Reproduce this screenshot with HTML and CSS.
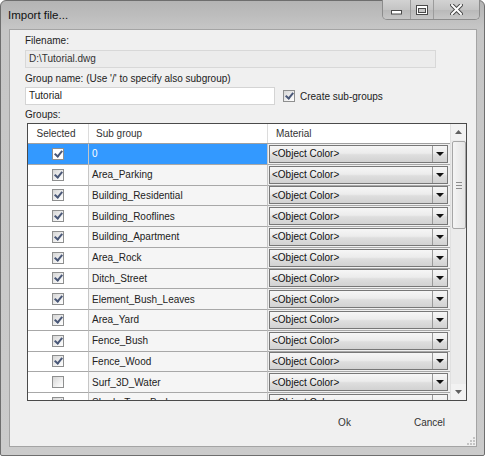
FILE: index.html
```html
<!DOCTYPE html>
<html>
<head>
<meta charset="utf-8">
<link rel="stylesheet" href="styles.css">
</head>
<body>
<div class="window">
  <div class="titlebar">
    <div class="title">Import file...</div>
    <div class="caption">
      <div class="cbtn cmin"><svg width="11" height="6" viewBox="0 0 11 6"><rect x="0.5" y="1.5" width="10" height="3.5" fill="#fff" stroke="#4a4a4a"/></svg></div>
      <div class="cbtn cmax"><svg width="12" height="10" viewBox="0 0 12 10"><rect x="0.5" y="0.5" width="11" height="9" fill="#fff" stroke="#4a4a4a"/><rect x="2.5" y="3.5" width="7" height="4" fill="#c8c8c8" stroke="#4a4a4a"/></svg></div>
      <div class="cbtn cclose"><svg width="13" height="11" viewBox="0 0 13 11"><path d="M2 1 L11 10 M11 1 L2 10" stroke="#4a4a4a" stroke-width="4" stroke-linecap="square"/><path d="M2 1 L11 10 M11 1 L2 10" stroke="#fff" stroke-width="2" stroke-linecap="square"/></svg></div>
    </div>
  </div>
  <div class="client">
    <div class="label l-file">Filename:</div>
    <div class="filebox">D:\Tutorial.dwg</div>
    <div class="label l-group">Group name: (Use '/' to specify also subgroup)</div>
    <div class="grouprow">
      <div class="textbox">Tutorial</div>
      <div class="chk-wrap">
        <span class="chk on"></span>
        <span class="chk-label">Create sub-groups</span>
      </div>
    </div>
    <div class="label l-groups">Groups:</div>
    <div class="grid">
      <div class="cols">
        <div class="row head">
          <div class="cell h-sel">Selected</div>
          <div class="cell h-name">Sub group</div>
          <div class="cell h-mat">Material</div>
        </div>
        <div class="row sel"><div class="cell c-sel"><span class="chk on"></span></div><div class="cell c-name">0</div><div class="cell c-mat"><div class="combo"><span class="ctext">&lt;Object Color&gt;</span><span class="carrow"></span></div></div></div>
        <div class="row"><div class="cell c-sel"><span class="chk on"></span></div><div class="cell c-name">Area_Parking</div><div class="cell c-mat"><div class="combo"><span class="ctext">&lt;Object Color&gt;</span><span class="carrow"></span></div></div></div>
        <div class="row"><div class="cell c-sel"><span class="chk on"></span></div><div class="cell c-name">Building_Residential</div><div class="cell c-mat"><div class="combo"><span class="ctext">&lt;Object Color&gt;</span><span class="carrow"></span></div></div></div>
        <div class="row"><div class="cell c-sel"><span class="chk on"></span></div><div class="cell c-name">Building_Rooflines</div><div class="cell c-mat"><div class="combo"><span class="ctext">&lt;Object Color&gt;</span><span class="carrow"></span></div></div></div>
        <div class="row"><div class="cell c-sel"><span class="chk on"></span></div><div class="cell c-name">Building_Apartment</div><div class="cell c-mat"><div class="combo"><span class="ctext">&lt;Object Color&gt;</span><span class="carrow"></span></div></div></div>
        <div class="row"><div class="cell c-sel"><span class="chk on"></span></div><div class="cell c-name">Area_Rock</div><div class="cell c-mat"><div class="combo"><span class="ctext">&lt;Object Color&gt;</span><span class="carrow"></span></div></div></div>
        <div class="row"><div class="cell c-sel"><span class="chk on"></span></div><div class="cell c-name">Ditch_Street</div><div class="cell c-mat"><div class="combo"><span class="ctext">&lt;Object Color&gt;</span><span class="carrow"></span></div></div></div>
        <div class="row"><div class="cell c-sel"><span class="chk on"></span></div><div class="cell c-name">Element_Bush_Leaves</div><div class="cell c-mat"><div class="combo"><span class="ctext">&lt;Object Color&gt;</span><span class="carrow"></span></div></div></div>
        <div class="row"><div class="cell c-sel"><span class="chk on"></span></div><div class="cell c-name">Area_Yard</div><div class="cell c-mat"><div class="combo"><span class="ctext">&lt;Object Color&gt;</span><span class="carrow"></span></div></div></div>
        <div class="row"><div class="cell c-sel"><span class="chk on"></span></div><div class="cell c-name">Fence_Bush</div><div class="cell c-mat"><div class="combo"><span class="ctext">&lt;Object Color&gt;</span><span class="carrow"></span></div></div></div>
        <div class="row"><div class="cell c-sel"><span class="chk on"></span></div><div class="cell c-name">Fence_Wood</div><div class="cell c-mat"><div class="combo"><span class="ctext">&lt;Object Color&gt;</span><span class="carrow"></span></div></div></div>
        <div class="row"><div class="cell c-sel"><span class="chk"></span></div><div class="cell c-name">Surf_3D_Water</div><div class="cell c-mat"><div class="combo"><span class="ctext">&lt;Object Color&gt;</span><span class="carrow"></span></div></div></div>
        <div class="row"><div class="cell c-sel"><span class="chk on"></span></div><div class="cell c-name">Shrub_Tree_Bark</div><div class="cell c-mat"><div class="combo"><span class="ctext">&lt;Object Color&gt;</span><span class="carrow"></span></div></div></div>
      </div>
      <div class="scrollbar">
        <div class="sb-btn"><svg width="7" height="4" viewBox="0 0 7 4"><path d="M0 4 L3.5 0 L7 4 Z" fill="#606060"/></svg></div>
        <div class="sb-thumb"><span></span><span></span><span></span></div>
        <div class="sb-track"></div>
        <div class="sb-btn"><svg width="7" height="4" viewBox="0 0 7 4"><path d="M0 0 L3.5 4 L7 0 Z" fill="#606060"/></svg></div>
      </div>
    </div>
    <div class="buttons">
      <div class="btn">Ok</div>
      <div class="btn">Cancel</div>
    </div>
    <svg class="grip" width="8" height="8" viewBox="0 0 8 8">
      <rect x="6" y="0" width="2" height="2" fill="#c4c4c4"/>
      <rect x="3" y="3" width="2" height="2" fill="#c4c4c4"/><rect x="6" y="3" width="2" height="2" fill="#c4c4c4"/>
      <rect x="0" y="6" width="2" height="2" fill="#c4c4c4"/><rect x="3" y="6" width="2" height="2" fill="#c4c4c4"/><rect x="6" y="6" width="2" height="2" fill="#c4c4c4"/>
    </svg>
  </div>
</div>
</body>
</html>
```
FILE: styles.css
```css
html, body {
  margin: 0;
  padding: 0;
  background: #ffffff;
}
body {
  width: 485px;
  height: 456px;
  font-family: "Liberation Sans", Arial, sans-serif;
  font-size: 10px;
  color: #222;
}
.window {
  box-sizing: border-box;
  width: 485px;
  height: 456px;
  border: 1px solid #6e6e6e;
  border-radius: 6px 6px 2px 2px;
  background: linear-gradient(#b4b4b4 0px, #c6c6c6 28px, #cbcbcb 100%);
  display: flex;
  flex-direction: column;
}
.titlebar {
  height: 28px;
  display: flex;
  align-items: flex-start;
}
.title {
  font-size: 11.5px;
  color: #111;
  padding-left: 7px;
  padding-top: 7px;
  line-height: 14px;
}
.caption {
  margin-left: auto;
  margin-right: 4px;
  margin-top: -1px;
  display: flex;
  height: 19px;
  border: 1px solid #8c8c8c;
  border-top: none;
  border-radius: 0 0 5px 5px;
  overflow: hidden;
}
.cbtn {
  height: 19px;
  display: flex;
  align-items: center;
  justify-content: center;
  background: linear-gradient(#d2d2d2, #c4c4c4 50%, #b8b8b8 51%, #c6c6c6);
  border-left: 1px solid #9c9c9c;
  box-sizing: border-box;
}
.cmin { width: 27px; border-left: none; padding-top: 5px; }
.cmax { width: 23px; }
.cclose { width: 46px; }
.client {
  position: relative;
  flex: 1;
  margin: 0 7px 8px 8px;
  background: #f0f0f0;
  border: 1px solid #a4a4a4;
  padding: 5px 9px 0 15px;
  display: flex;
  flex-direction: column;
}
.label {
  line-height: 12px;
  height: 12px;
}
.filebox {
  margin-top: 3px;
  width: 411px;
  height: 18px;
  box-sizing: border-box;
  background: #ececec;
  border: 1px solid #d8d8d8;
  padding-left: 3px;
  line-height: 16px;
  color: #333;
}
.l-group { margin-top: 5px; }
.grouprow {
  margin-top: 2px;
  display: flex;
  align-items: center;
  height: 18px;
}
.textbox {
  width: 250px;
  height: 18px;
  box-sizing: border-box;
  background: #fff;
  border: 1px solid #d4d4d4;
  padding-left: 3px;
  line-height: 16px;
}
.chk-wrap {
  display: flex;
  align-items: center;
  margin-left: 8px;
}
.chk-label { margin-left: 5px; }
.chk {
  display: inline-block;
  width: 12px;
  height: 12px;
  box-sizing: border-box;
  border: 1px solid #8e8f8f;
  background: linear-gradient(135deg, #d6d6d6, #f4f4f4 70%, #ffffff);
  position: relative;
}
.chk.on::after {
  content: "";
  position: absolute;
  left: 3px;
  top: 0px;
  width: 3px;
  height: 6px;
  border-right: 2px solid #4a5878;
  border-bottom: 2px solid #4a5878;
  transform: rotate(40deg);
}
.l-groups { margin-top: 4px; }
.grid {
  margin-top: 2px;
  margin-left: 2px;
  width: 440px;
  height: 278px;
  box-sizing: border-box;
  border: 1px solid #4a4a4a;
  display: flex;
  overflow: hidden;
  background: #fff;
}
.cols {
  width: 422px;
  overflow: hidden;
}
.row {
  display: grid;
  grid-template-columns: 61px 179px 182px;
  height: 20.75px;
  box-sizing: border-box;
}
.row.head {
  height: 20px;
  background: #fff;
  border-bottom: 1px solid #a0a0a0;
}
.cell {
  box-sizing: border-box;
  border-right: 1px solid #c6c6c6;
  border-bottom: 1px solid #a8a8a8;
  display: flex;
  align-items: center;
  white-space: nowrap;
  overflow: hidden;
}
.head .cell {
  border-bottom: none;
  border-right: 1px solid #dcdcdc;
  color: #333;
}
.h-sel { justify-content: center; padding-right: 4px; }
.h-name { padding-left: 7px; }
.h-mat { padding-left: 8px; border-right: none !important; }
.c-sel {
  justify-content: center;
  background: #fff;
}
.c-name {
  padding-left: 3px;
  background: #f5f5f5;
}
.row.sel .c-sel, .row.sel .c-name {
  background: #3399ff;
  color: #fff;
}
.row.sel .chk {
  background: #fff;
}
.c-mat {
  padding-left: 1px;
  border-right: none;
  background: #f0f0f0;
}
.combo {
  width: 179px;
  height: 18px;
  box-sizing: border-box;
  border: 1px solid #777;
  background: linear-gradient(#f6f6f6, #ececec 45%, #dedede 55%, #d2d2d2);
  display: flex;
  align-items: center;
}
.ctext {
  flex: 1;
  padding-left: 2px;
  color: #111;
}
.carrow {
  width: 15px;
  height: 16px;
  border-left: 1px solid #9a9a9a;
  box-sizing: border-box;
  position: relative;
}
.carrow::after {
  content: "";
  position: absolute;
  left: 3px;
  top: 6px;
  border-left: 4px solid transparent;
  border-right: 4px solid transparent;
  border-top: 4px solid #111;
}
.scrollbar {
  width: 16px;
  display: flex;
  flex-direction: column;
  background: #ebebeb;
  border-left: 1px solid #e0e0e0;
  box-sizing: border-box;
}
.sb-btn {
  height: 16px;
  display: flex;
  align-items: center;
  justify-content: center;
  background: #f2f2f2;
}
.sb-thumb {
  margin: 1px 0 0 1px;
  height: 88px;
  box-sizing: border-box;
  border: 1px solid #a6a6a6;
  border-radius: 2px;
  background: linear-gradient(90deg, #f4f4f4, #e4e4e4);
  display: flex;
  flex-direction: column;
  align-items: center;
  justify-content: center;
  gap: 2px;
}
.sb-thumb span {
  width: 6px;
  height: 1px;
  background: #8c8c8c;
}
.sb-track { flex: 1; }
.buttons {
  margin-top: 10px;
  display: flex;
  justify-content: flex-end;
  gap: 10px;
}
.btn {
  width: 75px;
  height: 23px;
  display: flex;
  align-items: center;
  justify-content: center;
  color: #333;
}
.grip {
  position: absolute;
  right: 1px;
  bottom: 1px;
}
```
